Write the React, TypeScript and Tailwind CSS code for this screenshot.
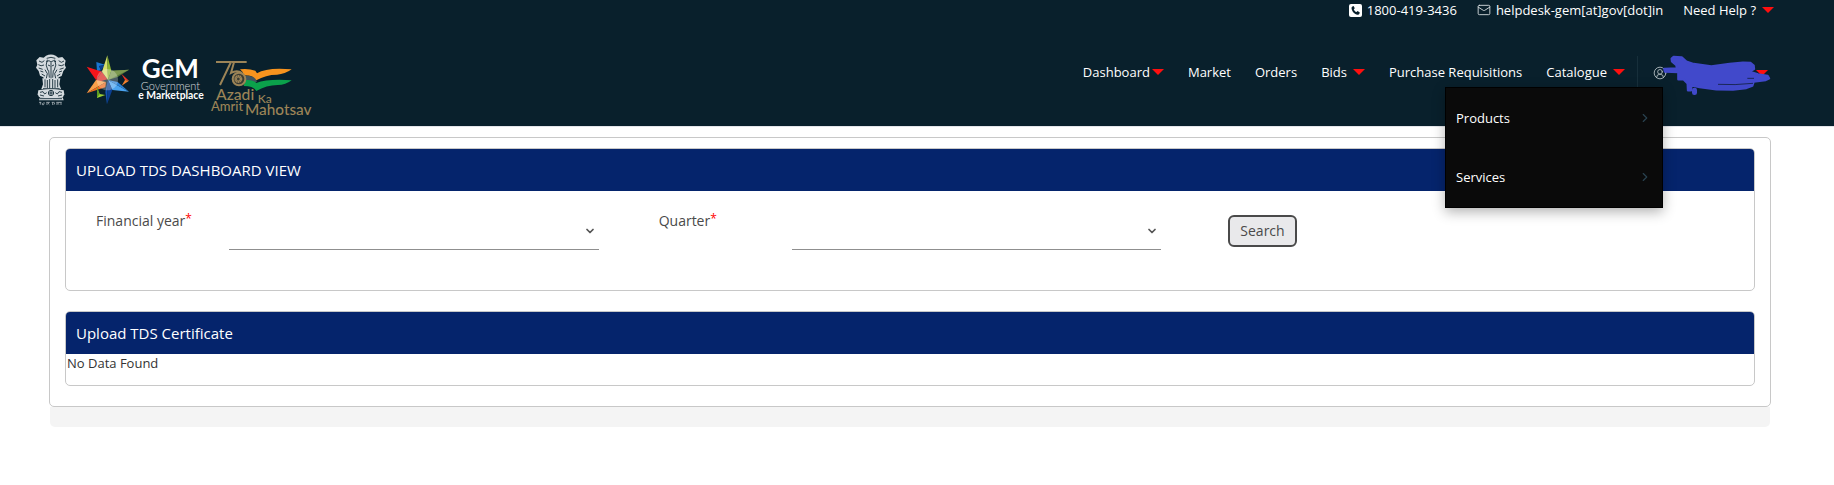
import { useState } from 'react';
import { ChevronDown, ChevronRight, CircleUserRound, Mail } from 'lucide-react';

function Caret() {
  return (
    <svg viewBox="0 0 12 6" className="h-[6px] w-3 flex-shrink-0" aria-hidden="true">
      <path d="M0 0h12L6 6z" fill="#ff0f0f" />
    </svg>
  );
}

function PhoneIcon() {
  return (
    <svg viewBox="0 0 13 13" className="h-[13px] w-[13px]" aria-hidden="true">
      <rect width="13" height="13" rx="2" fill="#fff" />
      <path
        d="M3.4 2.4 4.6 2l1.2 2.2-1 1c.5 1.3 1.4 2.3 2.7 2.9l1.1-1 2.2 1.3-.4 1.4c-.3.7-1 1-1.8.9C5.400 10.200 2.700 7.300 2.500 4c0-.7.300-1.300.900-1.600z"
        fill="#09202c"
      />
    </svg>
  );
}

// Ashoka emblem
function Emblem() {
  return (
    <svg viewBox="45 40 96 162" className="h-[54px] w-8" role="img" aria-label="State Emblem of India">
      <g fill="#d4dade">
        <path d="M78 48q15-7 29 0l8 6 12-2 10 11-3 12 4 9-8 10-5 15-9 4-4 9H74l-4-9-10-5-4-14-8-10 4-9-3-13 10-10 12 2z" />
        <path d="M67 116h54l-3 18 5 14H64l5-14z" />
        <path d="M55 152q38-10 76 0l2 12-4 8q-36 8-72 0l-4-8z" />
        <path d="M60 173h68l3 9H57z" />
      </g>
      <g fill="none" stroke="#09202c" strokeWidth="2.500">
        <path d="M80 56q13-6 26 0M79 66l8-3 6 4 7-4 8 3M84 76q9 8 18 0M82 60q-8 16 2 33M104 60q8 16-2 33M93 68v9" />
        <path d="M57 64l9 4 7-5M55 75q8 6 17 1M56 85l12 4M61 94l9 3M116 63l8 5 8-4M115 76q9 5 17-1M119 89l12-4M117 97l9-3" />
        <path d="M75 90l7 12-3 14M111 90l-7 12 3 14M93 82v34M86 92l2 22M100 92l-2 22M65 103l10 6M121 103l-10 6" />
        <path d="M75 119v24M82 121v24M89 118v28M98 118v28M105 121v24M113 119v24M69 147h50" />
        <circle cx="93" cy="160" r="8" />
        <path d="M93 152v16M85 160h16M60 158l9-2 5 7 6-4M60 166l12 3M126 158l-9-2-5 7-6-4M126 166l-12 3M60 177h66" />
      </g>
      <path
        d="M57 188h7M69 190h6M79 188h10M95 188h9M109 188h16M61 188v7M67 190v5q4 2 5-2M81 188v8M87 188q-4 5 1 7M98 188v8M104 190l-2 5M111 188v8M117 188q-5 5 0 7M123 188v8"
        fill="none"
        stroke="#c9d0d4"
        strokeWidth="2"
      />
    </svg>
  );
}

function GemLogo() {
  return (
    <svg viewBox="195 15 360 210" className="h-[70px] w-[120px]" role="img" aria-label="GeM Government e Marketplace">
      <path d="M229 66l28 9-20 3 6 13-12 3z" fill="#1976d2" />
      <path d="M243 91l-6-13 20-3z" fill="#0b3f8f" />
      <path d="M200 80l46 15-18 25z" fill="#f5151b" />
      <path d="M246 95l-18 25 4 7 30-9z" fill="#d82a20" />
      <path d="M200 160l28-40 30 6z" fill="#f9a04a" />
      <path d="M200 160l58-34-2 16z" fill="#ef6c1f" />
      <path d="M262 46l-16 49 18 25z" fill="#d5df6a" />
      <path d="M262 46l12 46-10 28z" fill="#8eb52e" />
      <path d="M274 92l53-3-34 22-29 9z" fill="#56793a" />
      <path d="M274 92l53-3-63 31z" fill="#7c9850" />
      <path d="M304 101l23 21-12-2z" fill="#ee3524" />
      <path d="M327 122l-22 15 10-17z" fill="#f7802b" />
      <path d="M264 120l63 35-50-5z" fill="#4aa3ef" />
      <path d="M264 120l63 35-34-29z" fill="#2d83d8" />
      <path d="M264 120l-8 36 5 37z" fill="#1453b4" />
      <path d="M264 120l13 30-16 43z" fill="#0b3f93" />
      <path d="M231 142v32l25-9-17-3z" fill="#9bcf35" />
      <path d="M231 142l8 20-8 12z" fill="#5c9c22" />
      <circle cx="262" cy="119" r="32" fill="#fff" opacity=".27" />
      <g fill="#fff" fontFamily="Lato, sans-serif">
        <text x="365" y="115" fontSize="78" fontWeight="700">
          G<tspan fontWeight="400">e</tspan>M
        </text>
        <text x="362" y="150" fontSize="33" fontWeight="300" opacity=".8">Government</text>
        <text x="355" y="178" fontSize="31" fontWeight="700">e Marketplace</text>
      </g>
    </svg>
  );
}

function AzadiLogo() {
  return (
    <svg viewBox="570 12 306 216" className="h-[72px] w-[102px]" role="img" aria-label="75 Azadi Ka Amrit Mahotsav">
      <path d="M660 88q26-3 46 4l5 8q30-19 104-12-20 15-44 16-34 0-62 17-8-16-38-15-2-12-11-18z" fill="#f7931e" />
      <path d="M674 108q20-3 33 9l4 8-12 3-20-6z" fill="#eef0ee" opacity=".25" />
      <path d="M676 120q22-2 33 9 34-13 106-8-18 14-42 14-34 0-64 18-8-15-38-15z" fill="#0ba14b" />
      <g fill="none" stroke="#9c8457" strokeWidth="6">
        <path d="M588 66h45l-33 69" />
        <path d="M636 66h44M642 67l-9 32q18-10 33 0" />
      </g>
      <circle cx="657" cy="117" r="19" fill="#3b3b32" stroke="#9c8457" strokeWidth="6" />
      <circle cx="655" cy="117" r="8" fill="none" stroke="#9c8457" strokeWidth="8" strokeDasharray="4 1" />
      <g fill="#9c8457" fontFamily="Lato, sans-serif" fontWeight="500">
        <text x="588" y="180" fontSize="47">Azadi</text>
        <text x="713" y="189" fontSize="36">Ka</text>
        <text x="573" y="213" fontSize="39">Amrit</text>
        <text x="675" y="224" fontSize="46">Mahotsav</text>
      </g>
    </svg>
  );
}

// Scribble that hides the account name
function AccountMask() {
  return (
    <svg
      viewBox="80 15 324 126"
      className="absolute top-[2px] left-[10px] h-[42px] w-[108px]"
      aria-hidden="true"
    >
      <path
        d="M106 29L112 24L136 25L150 38L172 45L225 52L280 45L320 41L343 42L352 50L353 60L338 68L365 76L394 81L398 88L388 93L352 98L348 110L330 117L290 122L240 121L190 114L165 109L164 124L155 124L154 103L142 91L126 91L126 69L86 68L84 60L122 58L120 48L107 37Z"
        fill="#4149cb"
        stroke="#4149cb"
        strokeWidth="7"
        strokeLinejoin="round"
      />
      <rect x="167" y="116" width="15" height="22" rx="7" fill="#4149cb" />
      <path d="M245 106q50 3 105-3M333 88h20" fill="none" stroke="#1a2758" strokeWidth="3" />
    </svg>
  );
}

interface SelectFieldProps {
  id: string;
  label: string;
}

function SelectField({ id, label }: SelectFieldProps) {
  return (
    <div className="flex pl-[30px] text-sm">
      <label htmlFor={id} className="w-1/4 flex-shrink-0 text-[#4a4a4a]">
        {label}
        <span className="align-[3px] text-xs leading-none text-[#f00]">*</span>
      </label>
      <div className="relative mr-[30px] flex-1">
        <select
          id={id}
          defaultValue=""
          className="h-[39px] w-full appearance-none border-b border-[#8f8f8f] bg-transparent pr-6"
        >
          <option value="" />
        </select>
        <ChevronDown className="pointer-events-none absolute top-[14px] right-[3px] h-3 w-3 text-[#555]" strokeWidth={3.500} />
      </div>
    </div>
  );
}

interface PanelProps {
  title: string;
  children: React.ReactNode;
}

function Panel({ title, children }: PanelProps) {
  return (
    <section className="overflow-hidden rounded-[5px] border border-[#c8c8c8]">
      <h2 className="bg-[#05246c] px-[10px] py-[11px] text-[15px] leading-5 text-white">{title}</h2>
      {children}
    </section>
  );
}

export default function App() {
  const [catalogueOpen, setCatalogueOpen] = useState(true);

  return (
    <div className="min-h-screen bg-white font-['Open_Sans',sans-serif] text-[13px] leading-5 text-[#333]">
      <header className="border-b border-[#e3e5ea] bg-[#09202c] text-white">
        {/* Contact bar */}
        <div className="flex h-[22px] items-center justify-end gap-5 pr-[60px] pb-[2px]">
          <a href="#phone" className="flex items-center gap-[5px]">
            <PhoneIcon />
            1800-419-3436
          </a>
          <a href="#mail" className="flex items-center gap-[5px]">
            <Mail className="h-[14px] w-[14px] text-[#dde2e5]" strokeWidth={1.500} />
            helpdesk-gem[at]gov[dot]in
          </a>
          <button type="button" className="flex items-center gap-[6px]">
            Need Help ?
            <Caret />
          </button>
        </div>

        <div className="flex h-[104px] items-start justify-between pr-16 pl-[35px]">
          <div className="flex items-center pt-[22px]">
            <Emblem />
            <div className="ml-[18px] flex items-center gap-[5px]">
              <GemLogo />
              <AzadiLogo />
            </div>
          </div>

          <nav className="mt-[33px] flex h-8 items-center gap-6 pt-[2px]">
            <button type="button" className="flex items-center gap-[2px]">
              Dashboard
              <Caret />
            </button>
            <a href="#market">Market</a>
            <a href="#orders">Orders</a>
            <button type="button" className="flex items-center gap-[6px]">
              Bids
              <Caret />
            </button>
            <a href="#requisitions">Purchase Requisitions</a>

            <div className="relative flex h-8 items-center">
              <button
                type="button"
                className="flex items-center gap-[6px]"
                onClick={() => setCatalogueOpen(!catalogueOpen)}
              >
                Catalogue
                <Caret />
              </button>
              {catalogueOpen && (
                <div className="absolute top-[31px] right-[-38px] z-20 w-[218px] border border-black bg-[#0a0a0a] pb-px shadow-[0_4px_12px_rgba(0,0,0,0.3)]">
                  {['Products', 'Services'].map((item) => (
                    <a key={item} href="#catalogue" className="flex h-[59px] items-center justify-between px-[10px]">
                      {item}
                      <ChevronRight className="h-[14px] w-[14px] text-[#29424f]" strokeWidth={2} />
                    </a>
                  ))}
                </div>
              )}
            </div>

            <div className="-ml-3 flex h-8 items-center border-l border-[#172f3b] pl-[15px]">
              <button
                type="button"
                aria-label="Account"
                className="relative mt-[2px] flex h-[42px] w-[117px] items-center justify-between pr-[2px]"
              >
                <CircleUserRound className="h-[14px] w-[14px] text-[#b5bfc4]" strokeWidth={1.500} />
                <Caret />
                <AccountMask />
              </button>
            </div>
          </nav>
        </div>
      </header>

      <main className="mr-[63px] ml-[49px] pt-[10px]">
        <div className="rounded-[5px] border border-[#c8c8c8] px-[15px] pt-[10px] pb-5">
          <Panel title="UPLOAD TDS DASHBOARD VIEW">
            <form className="grid h-[99px] grid-cols-3 pt-5" onSubmit={(e) => e.preventDefault()}>
              <SelectField id="year" label="Financial year" />
              <SelectField id="quarter" label="Quarter" />
              <div className="pt-1 pl-[37px]">
                <button
                  type="submit"
                  className="h-8 rounded-md border-2 border-[#4a4a4a] bg-[#e9e9eb] px-[10px] text-sm text-[#4a4a4a]"
                >
                  Search
                </button>
              </div>
            </form>
          </Panel>

          <div className="mt-5">
            <Panel title="Upload TDS Certificate">
              <p className="h-[31px] px-px leading-[18px]">No Data Found</p>
            </Panel>
          </div>
        </div>
        <div className="mr-px ml-px h-5 rounded-b-[5px] bg-[#f4f4f4]" />
      </main>
    </div>
  );
}
